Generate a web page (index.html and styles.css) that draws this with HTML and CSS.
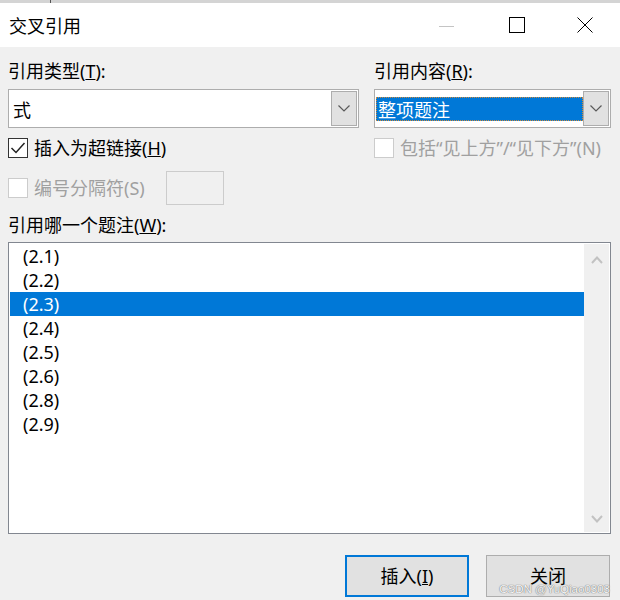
FILE: index.html
```html
<!DOCTYPE html>
<html lang="zh-CN">
<head>
<meta charset="utf-8">
<title>交叉引用</title>
<link rel="stylesheet" href="styles.css">
</head>
<body>
<div class="window">
  <div class="topstrip"><span class="tick"></span></div>
  <div class="titlebar">
    <div class="title">交叉引用</div>
    <div class="controls">
      <div class="ctl"><span class="min-line"></span></div>
      <div class="ctl"><span class="max-box"></span></div>
      <div class="ctl">
        <svg width="16" height="16" viewBox="0 0 16 16"><path d="M0.5 0.5 L15.5 15.5 M15.5 0.5 L0.5 15.5" stroke="#000" stroke-width="1" fill="none"/></svg>
      </div>
    </div>
  </div>

  <div class="content">
    <div class="grid">
      <div class="label">引用类型(<u>T</u>):</div>
      <div class="label">引用内容(<u>R</u>):</div>

      <div class="combo">
        <div class="combo-text"><span class="plain">式</span></div>
        <div class="dd-btn">
          <svg width="12" height="7" viewBox="0 0 12 7"><path d="M0.5 0.5 L6 6 L11.5 0.5" stroke="#5a5a5a" stroke-width="1.2" fill="none"/></svg>
        </div>
      </div>
      <div class="combo">
        <div class="combo-text"><span class="selected">整项题注</span></div>
        <div class="dd-btn">
          <svg width="12" height="7" viewBox="0 0 12 7"><path d="M0.5 0.5 L6 6 L11.5 0.5" stroke="#5a5a5a" stroke-width="1.2" fill="none"/></svg>
        </div>
      </div>

      <div class="check-row">
        <span class="box checked">
          <svg width="18" height="18" viewBox="0 0 18 18"><path d="M2.5 9 L7 13.5 L15.5 4" stroke="#222" stroke-width="1.5" fill="none"/></svg>
        </span>
        <span class="check-label">插入为超链接(<u>H</u>)</span>
      </div>
      <div class="check-row">
        <span class="box disabled"></span>
        <span class="check-label dim">包括“见上方”/“见下方”(N)</span>
      </div>

      <div class="check-row sep-row">
        <span class="box disabled"></span>
        <span class="check-label dim">编号分隔符(S)</span>
        <span class="sep-input"></span>
      </div>
      <div></div>
    </div>

    <div class="label list-label">引用哪一个题注(<u>W</u>):</div>
    <div class="listbox">
      <ul class="items">
        <li>(2.1)</li>
        <li>(2.2)</li>
        <li class="sel">(2.3)</li>
        <li>(2.4)</li>
        <li>(2.5)</li>
        <li>(2.6)</li>
        <li>(2.8)</li>
        <li>(2.9)</li>
      </ul>
      <div class="scrollbar">
        <svg width="12" height="8" viewBox="0 0 12 8"><path d="M1 7 L6 1.5 L11 7" stroke="#c2c2c2" stroke-width="2" fill="none"/></svg>
        <svg width="12" height="8" viewBox="0 0 12 8"><path d="M1 1 L6 6.5 L11 1" stroke="#c2c2c2" stroke-width="2" fill="none"/></svg>
      </div>
    </div>

    <div class="buttons">
      <div class="btn default">插入(<u>I</u>)</div>
      <div class="btn">关闭</div>
    </div>
  </div>
  <div class="watermark">CSDN @YuQiao0303</div>
</div>
</body>
</html>
```

FILE: styles.css
```css
* { box-sizing: border-box; }
html, body { margin: 0; padding: 0; }
body {
  width: 620px;
  height: 600px;
  overflow: hidden;
  background: #f0f0f0;
  font-family: "Noto Sans", "Noto Sans CJK SC", sans-serif;
  font-size: 18px;
  color: #000;
}
.window {
  position: relative;
  width: 620px;
  height: 600px;
  background: #f0f0f0;
}
.topstrip {
  height: 3px;
  background: #d4d4d4;
  position: relative;
}
.tick {
  position: absolute;
  left: 50px;
  top: 0;
  width: 1px;
  height: 3px;
  background: #555;
}
.titlebar {
  height: 44px;
  background: #fff;
  display: flex;
  align-items: center;
  justify-content: space-between;
  padding-left: 9px;
  padding-right: 1px;
}
.title {
  font-family: "Noto Sans CJK SC", sans-serif;
  font-size: 18px;
  line-height: 24px;
}
.controls {
  display: flex;
  height: 44px;
}
.ctl {
  width: 69px;
  height: 44px;
  display: flex;
  align-items: center;
  justify-content: center;
}
.min-line {
  width: 15px;
  height: 1px;
  background: #c4c4c4;
  margin-top: 2px;
}
.max-box {
  width: 16px;
  height: 16px;
  border: 1px solid #000;
  margin-left: 2px;
}
.content {
  padding: 12px 9px 0 8px;
}
.grid {
  display: grid;
  grid-template-columns: 351px 237px;
  column-gap: 15px;
}
.label {
  line-height: 24px;
  height: 24px;
  white-space: nowrap;
}
.grid > .label { margin-bottom: 6px; }
.combo {
  height: 39px;
  border: 1px solid #adadad;
  background: #fff;
  padding: 1px;
  display: flex;
}
.combo-text {
  flex: 1;
  display: flex;
  align-items: center;
  min-width: 0;
}
.plain {
  padding-left: 3px;
  line-height: 24px;
  font-family: "Noto Sans CJK SC", sans-serif;
}
.selected {
  display: block;
  width: 100%;
  height: 24px;
  line-height: 22px;
  padding-left: 1px;
  background: #0078d7;
  color: #fff;
  border: 1px dotted #d08a3a;
  font-family: "Noto Sans CJK SC", sans-serif;
}
.dd-btn {
  width: 26px;
  height: 35px;
  border: 1px solid #adadad;
  background: #e1e1e1;
  display: flex;
  align-items: center;
  justify-content: center;
}
.check-row {
  display: flex;
  align-items: center;
  height: 20px;
  margin-top: 10px;
  white-space: nowrap;
}
.box {
  width: 20px;
  height: 20px;
  border: 1px solid #333;
  background: #fff;
  display: flex;
  align-items: center;
  justify-content: center;
  flex: none;
}
.box.disabled {
  border-color: #cccccc;
}
.check-label {
  margin-left: 6px;
  line-height: 24px;
}
.dim { color: #a0a0a0; }
.sep-row {
  height: 34px;
  margin-top: 13px;
}
.sep-input {
  width: 58px;
  height: 34px;
  border: 1px solid #cccccc;
  background: #f0f0f0;
  margin-left: 21px;
}
.list-label {
  margin-top: 8px;
}
.listbox {
  margin-top: 5px;
  height: 292px;
  border: 1px solid #828790;
  background: #fff;
  padding: 1px;
  display: flex;
}
.items {
  list-style: none;
  margin: 0;
  padding: 0;
  flex: 1;
}
.items li {
  height: 24px;
  line-height: 24px;
  padding-left: 13px;
}
.items li.sel {
  background: #0078d7;
  color: #fff;
}
.scrollbar {
  width: 25px;
  background: #f0f0f0;
  display: flex;
  flex-direction: column;
  justify-content: space-between;
  align-items: center;
  padding: 12px 0 9px;
}
.buttons {
  display: flex;
  justify-content: flex-end;
  gap: 17px;
  margin-top: 21px;
  padding-right: 1px;
}
.btn {
  width: 124px;
  height: 42px;
  border: 1px solid #adadad;
  background: #e1e1e1;
  display: flex;
  align-items: center;
  justify-content: center;
  line-height: 24px;
}
.btn.default {
  border: 2px solid #0078d7;
}
.watermark {
  position: absolute;
  right: 10px;
  bottom: 5px;
  font-family: "Liberation Sans", sans-serif;
  font-size: 11.5px;
  color: rgba(255,255,255,0.95);
  text-shadow: 0 0 1px #777, 0 0 1px #777;
}
```
